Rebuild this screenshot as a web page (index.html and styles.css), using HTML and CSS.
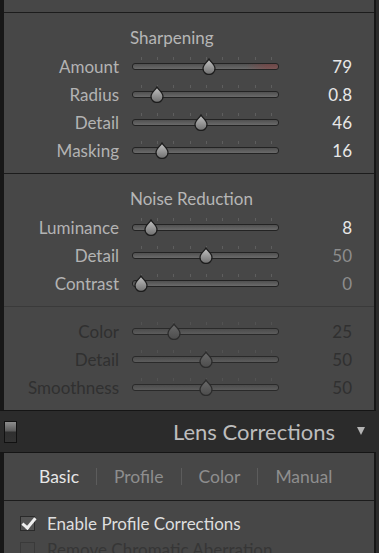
FILE: index.html
```html
<!DOCTYPE html>
<html lang="en">
<head>
    <meta charset="UTF-8">
    <meta name="viewport" content="width=device-width, initial-scale=1.0">
    <title>Detail</title>
    <link rel="stylesheet" href="styles.css">
</head>
<body>

<svg width="0" height="0" class="defs">
    <defs>
        <linearGradient id="knob" x1="0" y1="0" x2="0" y2="1">
            <stop offset="0" stop-color="#c4c4c4"/>
            <stop offset="1" stop-color="#6e6e6e"/>
        </linearGradient>
        <linearGradient id="knob-dim" x1="0" y1="0" x2="0" y2="1">
            <stop offset="0" stop-color="#6a6a6a"/>
            <stop offset="1" stop-color="#4c4c4c"/>
        </linearGradient>
        <symbol id="thumb" viewBox="0 0 16 17">
            <path d="M8 1 C9.5 4 14 6.2 14 10.5 A6 6 0 0 1 2 10.5 C2 6.2 6.5 4 8 1 Z"/>
        </symbol>
    </defs>
</svg>

<div class="panel detail">
    <div class="section top"></div>

    <!-- Sharpening -->
    <div class="section">
        <div class="heading">Sharpening</div>
        <div class="row">
            <span class="label">Amount</span>
            <div class="slider"><div class="track warn"></div><svg class="thumb" style="left: 69px"><use href="#thumb"/></svg></div>
            <span class="value">79</span>
        </div>
        <div class="row">
            <span class="label">Radius</span>
            <div class="slider"><div class="track"></div><svg class="thumb" style="left: 17px"><use href="#thumb"/></svg></div>
            <span class="value">0.8</span>
        </div>
        <div class="row">
            <span class="label">Detail</span>
            <div class="slider"><div class="track"></div><svg class="thumb" style="left: 61px"><use href="#thumb"/></svg></div>
            <span class="value">46</span>
        </div>
        <div class="row">
            <span class="label">Masking</span>
            <div class="slider"><div class="track"></div><svg class="thumb" style="left: 22px"><use href="#thumb"/></svg></div>
            <span class="value">16</span>
        </div>
    </div>

    <!-- Noise Reduction -->
    <div class="section">
        <div class="heading">Noise Reduction</div>
        <div class="row">
            <span class="label">Luminance</span>
            <div class="slider"><div class="track"></div><svg class="thumb" style="left: 11px"><use href="#thumb"/></svg></div>
            <span class="value">8</span>
        </div>
        <div class="row">
            <span class="label">Detail</span>
            <div class="slider"><div class="track"></div><svg class="thumb" style="left: 66px"><use href="#thumb"/></svg></div>
            <span class="value muted">50</span>
        </div>
        <div class="row">
            <span class="label">Contrast</span>
            <div class="slider"><div class="track"></div><svg class="thumb" style="left: 1px"><use href="#thumb"/></svg></div>
            <span class="value muted">0</span>
        </div>
    </div>

    <!-- color noise (disabled look) -->
    <div class="section dim">
        <div class="row">
            <span class="label">Color</span>
            <div class="slider"><div class="track"></div><svg class="thumb" style="left: 34px"><use href="#thumb"/></svg></div>
            <span class="value">25</span>
        </div>
        <div class="row">
            <span class="label">Detail</span>
            <div class="slider"><div class="track"></div><svg class="thumb" style="left: 66px"><use href="#thumb"/></svg></div>
            <span class="value">50</span>
        </div>
        <div class="row">
            <span class="label">Smoothness</span>
            <div class="slider"><div class="track"></div><svg class="thumb" style="left: 66px"><use href="#thumb"/></svg></div>
            <span class="value">50</span>
        </div>
    </div>
</div>

<div class="panel-header">
    <span class="switch"></span>
    <span class="title">Lens Corrections</span>
    <span class="arrow"></span>
</div>

<div class="panel lens">
    <div class="tabs">
        <span class="tab active">Basic</span>
        <span class="sep"></span>
        <span class="tab">Profile</span>
        <span class="sep"></span>
        <span class="tab">Color</span>
        <span class="sep"></span>
        <span class="tab">Manual</span>
    </div>
    <div class="options">
        <label class="check"><span class="box checked"></span>Enable Profile Corrections</label>
        <label class="check off"><span class="box"></span>Remove Chromatic Aberration</label>
    </div>
</div>

</body>
</html>
```

FILE: styles.css
```css
/* Develop panel look */
body {
    margin: 0;
    padding: 0;
    background-color: #2b2b2b;
    font-family: Lato, "Open Sans", sans-serif;
    overflow: hidden;
}

.defs {
    position: absolute;
}

.panel {
    background-color: #474747;
    border-left: 4px solid #171717;
    border-right: 2px solid #171717;
    margin-right: 3px;
}

.detail {
    border-bottom: 1px solid #151515;
}

.section {
    padding: 11px 0 9px;
    border-bottom: 1px solid #1c1c1c;
}

.section.top {
    height: 12px;
    padding: 0;
}

.section.dim {
    padding-top: 10px;
    border-bottom: none;
    border-top: 1px solid #3a3a3a;
}

.section + .section.dim {
    margin-top: -1px;
}

.heading {
    height: 28px;
    line-height: 28px;
    padding-left: 126px;
    font-size: 17px;
    color: #b6b6b6;
}

.row {
    display: flex;
    align-items: center;
    height: 28px;
}

.label {
    width: 115px;
    margin-right: 13px;
    text-align: right;
    font-size: 17px;
    color: #b3b3b3;
}

.slider {
    position: relative;
    width: 147px;
    height: 28px;
    display: flex;
    align-items: center;
}

/* tick marks above the track */
.slider::before {
    content: "";
    position: absolute;
    left: 9px;
    top: 5px;
    width: 132px;
    height: 3px;
    background: repeating-linear-gradient(to right, #5e5e5e 0 1px, transparent 1px 16.25px);
}

.track {
    width: 145px;
    height: 5px;
    border: 1px solid #232323;
    border-radius: 3px;
    background: linear-gradient(#505050, #6a6a6a);
}

.track.warn {
    background: linear-gradient(to right, rgba(0, 0, 0, 0) 78%, rgba(140, 60, 60, 0.45) 92%),
                linear-gradient(#505050, #6a6a6a);
}

.thumb {
    position: absolute;
    top: 6px;
    width: 16px;
    height: 17px;
    fill: url(#knob);
    stroke: #1c1c1c;
    stroke-width: 1.3;
}

.value {
    width: 73px;
    text-align: right;
    font-size: 17px;
    color: #e8e8e8;
}

.value.muted {
    color: #8d8d8d;
}

.dim .label,
.dim .value {
    color: #303030;
}

.dim .track {
    border-color: #2a2a2a;
    background: linear-gradient(#4c4c4c, #5c5c5c);
}

.dim .slider::before {
    background: repeating-linear-gradient(to right, #525252 0 1px, transparent 1px 16.25px);
}

.dim .thumb {
    fill: url(#knob-dim);
    stroke: #2c2c2c;
}

/* Lens Corrections header */
.panel-header {
    height: 41px;
    display: flex;
    align-items: center;
    padding-left: 4px;
}

.switch {
    width: 11px;
    height: 20px;
    border: 1px solid #111;
    background: linear-gradient(#8e8e8e 0, #5a5a5a 45%, #2f2f2f 50%, #333 100%);
}

.title {
    margin-left: auto;
    font-size: 22px;
    color: #bdbdbd;
}

.arrow {
    width: 0;
    height: 0;
    margin: 0 14px 2px 22px;
    border-left: 4px solid transparent;
    border-right: 4px solid transparent;
    border-top: 8px solid #b4b4b4;
}

.lens {
    border-top: 1px solid #151515;
    height: 110px;
}

.tabs {
    height: 47px;
    display: flex;
    align-items: center;
    padding-left: 35px;
    border-bottom: 1px solid #1c1c1c;
    font-size: 17.5px;
}

.tab {
    color: #8e8e8e;
}

.tab.active {
    color: #e6e6e6;
}

.sep {
    width: 1px;
    height: 17px;
    margin: 0 17px;
    background-color: #5c5c5c;
}

.options {
    padding: 9px 0 0 16px;
}

.check {
    display: flex;
    align-items: center;
    height: 26px;
    font-size: 17px;
    color: #dedede;
}

.check.off {
    color: #363636;
}

.box {
    position: relative;
    width: 13px;
    height: 13px;
    margin-right: 12px;
    border: 1px solid #2a2a2a;
    background-color: #555;
}

.check.off .box {
    background-color: transparent;
    border-color: #3a3a3a;
}

.box.checked::after {
    content: "";
    position: absolute;
    left: 4px;
    top: -2px;
    width: 5px;
    height: 11px;
    border-right: 3px solid #f0f0f0;
    border-bottom: 3px solid #f0f0f0;
    transform: rotate(40deg);
}
```
